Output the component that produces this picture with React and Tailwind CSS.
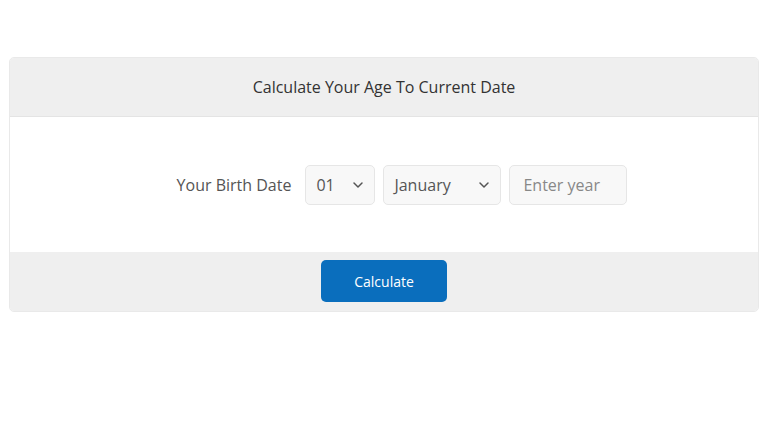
import { ChevronDown } from 'lucide-react';

const Select = ({ value, width }) => (
  <div className={`h-10 ${width} flex items-center justify-between pl-[10px] pr-[8px] bg-[#f8f8f8] border border-[#e6e6e6] rounded-[5px] text-[16px] text-[#555]`}>
    <span>{value}</span>
    <ChevronDown size={16} strokeWidth={2.25} className="text-[#555]" />
  </div>
);

export default function App() {
  return (
    <div className="min-h-screen bg-white px-[9px] pt-[57px] font-['Open_Sans',sans-serif]">
      <div className="rounded-[5px] border border-[#e9e9e9] overflow-hidden">
        <div className="h-[59px] bg-[#efefef] border-b border-[#e4e4e4] flex items-center justify-center text-[16px] text-[#333]">
          Calculate Your Age To Current Date
        </div>
        <div className="h-[135px] bg-white flex items-center justify-center pl-[36px]">
          <span className="text-[16px] text-[#555] mr-[14px]">Your Birth Date</span>
          <div className="flex gap-2">
            <Select value="01" width="w-[70px]" />
            <Select value="January" width="w-[118px]" />
            <div className="h-10 w-[118px] flex items-center pl-[13px] bg-[#f8f8f8] border border-[#e6e6e6] rounded-[5px] text-[16px] text-[#888]">
              Enter year
            </div>
          </div>
        </div>
        <div className="h-[59px] bg-[#efefef] flex items-start justify-center pt-[8px]">
          <button className="w-[126px] h-[42px] rounded-[5px] bg-[#0a6ebd] text-white text-[14px]">
            Calculate
          </button>
        </div>
      </div>
    </div>
  );
}
